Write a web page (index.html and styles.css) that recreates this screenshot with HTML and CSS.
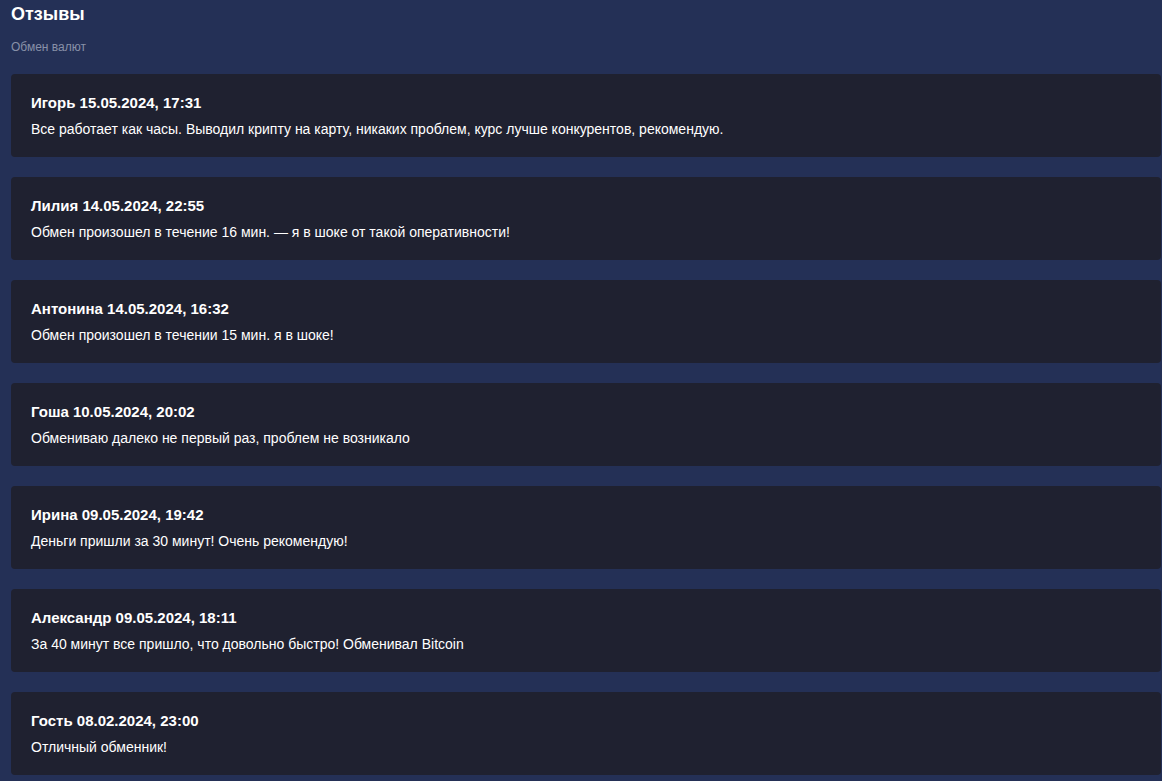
FILE: index.html
```html
<!DOCTYPE html>
<html lang="ru">
<head>
    <meta charset="UTF-8">
    <meta name="viewport" content="width=device-width, initial-scale=1.0">
    <title>Отзывы</title>
    <link rel="stylesheet" href="styles.css">
</head>
<body>
    <div class="page">
        <h1 class="page-title">Отзывы</h1>
        <div class="page-sub">Обмен валют</div>
        <div class="reviews">
            <div class="review">
                <div class="review-head">Игорь 15.05.2024, 17:31</div>
                <div class="review-text">Все работает как часы. Выводил крипту на карту, никаких проблем, курс лучше конкурентов, рекомендую.</div>
            </div>
            <div class="review">
                <div class="review-head">Лилия 14.05.2024, 22:55</div>
                <div class="review-text">Обмен произошел в течение 16 мин. — я в шоке от такой оперативности!</div>
            </div>
            <div class="review">
                <div class="review-head">Антонина 14.05.2024, 16:32</div>
                <div class="review-text">Обмен произошел в течении 15 мин. я в шоке!</div>
            </div>
            <div class="review">
                <div class="review-head">Гоша 10.05.2024, 20:02</div>
                <div class="review-text">Обмениваю далеко не первый раз, проблем не возникало</div>
            </div>
            <div class="review">
                <div class="review-head">Ирина 09.05.2024, 19:42</div>
                <div class="review-text">Деньги пришли за 30 минут! Очень рекомендую!</div>
            </div>
            <div class="review">
                <div class="review-head">Александр 09.05.2024, 18:11</div>
                <div class="review-text">За 40 минут все пришло, что довольно быстро! Обменивал Bitcoin</div>
            </div>
            <div class="review">
                <div class="review-head">Гость 08.02.2024, 23:00</div>
                <div class="review-text">Отличный обменник!</div>
            </div>
        </div>
    </div>
</body>
</html>
```

FILE: styles.css
```css
* {padding: 0; margin: 0; box-sizing: border-box;}
html, body {background: #243056;}
body {font-family: "Liberation Sans", Arial, sans-serif; color: #fff;}

.page {padding: 3px 1px 20px 11px;}
.page-title {font-size: 18px; font-weight: bold; line-height: 22px;}
.page-sub {margin-top: 15px; font-size: 12px; line-height: 14px; color: #8890a8;}

.reviews {margin-top: 20px; display: flex; flex-direction: column; gap: 20px;}
.review {background: #1f2130; border-radius: 4px; padding: 20px 20px 19px;}
.review-head {font-size: 15px; font-weight: bold; line-height: 18px;}
.review-text {margin-top: 9px; font-size: 14px; line-height: 17px;}
```
